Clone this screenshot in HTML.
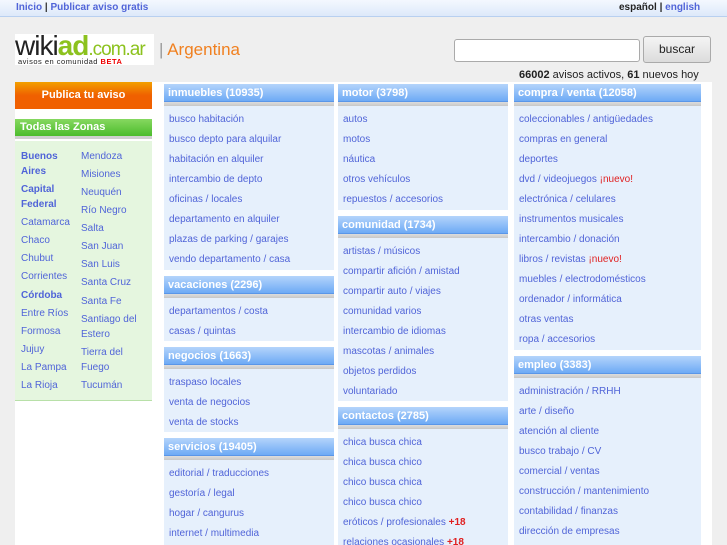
<!DOCTYPE html>
<html><head><meta charset="utf-8"><style>
*{margin:0;padding:0;box-sizing:border-box}
html,body{width:727px;height:545px;overflow:hidden}
body{background:#efefef;font-family:"Liberation Sans",sans-serif;position:relative}
a{color:#5064d8;text-decoration:none}
.top{position:absolute;left:0;top:0;width:727px;height:17px;background:linear-gradient(#f4f8fe,#dde9fa);border-bottom:1px solid #b8d0f0;font-size:10px;font-weight:bold;line-height:16px}
.white{position:absolute;left:15px;top:82px;width:697px;height:463px;background:#fff}
.box{position:absolute;background:#e6f0fc}
.hd{height:18px;background:linear-gradient(#b4d4fb,#6eaaf5);color:#fff;font-weight:bold;font-size:11px;line-height:18px;padding-left:4px;border-bottom:1px solid #5a96e8}
.gb{height:4px;background:linear-gradient(#ddd,#c8c8c8)}
.box ul{list-style:none;padding:8px 0 0 5px}
.box li{height:20px;font-size:10px;line-height:12px}
.r{color:#e02020}
.zones{position:absolute;left:15px;top:141px;width:137px;height:260px;background:#e5f6df;border-bottom:1px solid #b8e0a8;font-size:10px}
.zones div{position:absolute;line-height:14.5px}
</style></head><body>
<div class="top"><span style="position:absolute;left:16px"><a href="#">Inicio</a> <span style="color:#333">|</span> <a href="#">Publicar aviso gratis</a></span><span style="position:absolute;left:619px;color:#222">español | <a href="#">english</a></span></div>
<div style="position:absolute;left:15px;top:34px;width:139px;height:31px;background:#fff"></div>
<div style="position:absolute;left:15px;top:31px;font-size:28px;letter-spacing:-1px;line-height:30px"><span style="color:#222">wiki</span><span style="color:#8cc21e;font-weight:bold">ad</span><span style="color:#8cc21e;font-size:19px">.com.ar</span></div>
<div style="position:absolute;left:18px;top:57px;font-size:7.5px;color:#222;letter-spacing:.5px">avisos en comunidad <b style="color:#e00">BETA</b></div>
<div style="position:absolute;left:159px;top:40px;font-size:17px;color:#f08020"><span style="color:#999">|</span> Argentina</div>
<div style="position:absolute;left:454px;top:39px;width:186px;height:23px;border:1px solid #aaa;border-radius:3px;background:#fff"></div>
<div style="position:absolute;left:643px;top:36px;width:68px;height:27px;border:1px solid #aaa;border-radius:3px;background:linear-gradient(#f4f4f4,#dcdcdc);font-size:12px;text-align:center;line-height:25px;color:#222">buscar</div>
<div style="position:absolute;left:519px;top:69px;font-size:11px;color:#222"><b>66002</b> avisos activos, <b>61</b> nuevos hoy</div>
<div class="white"></div>
<div style="position:absolute;left:15px;top:82px;width:137px;height:27px;background:linear-gradient(#f2a000,#f06000 50%,#f06000);color:#fff;font-weight:bold;font-size:11px;text-align:center;line-height:27px">Publica tu aviso</div>
<div style="position:absolute;left:15px;top:119px;width:137px;background:linear-gradient(#86d860,#4cbc2c);color:#fff;font-weight:bold;font-size:11px;line-height:17px;padding-left:5px;border-bottom:3px solid #cfcfcf;height:20px">Todas las Zonas</div>
<div class="zones">
<div style="left:6px;top:9px;width:55px;font-weight:bold"><a href="#">Buenos Aires</a></div>
<div style="left:6px;top:42px;font-weight:bold"><a href="#">Capital<br>Federal</a></div>
<div style="left:6px;top:75px"><a href="#">Catamarca</a></div>
<div style="left:6px;top:93px"><a href="#">Chaco</a></div>
<div style="left:6px;top:111px"><a href="#">Chubut</a></div>
<div style="left:6px;top:129px"><a href="#">Corrientes</a></div>
<div style="left:6px;top:148px;font-weight:bold"><a href="#">Córdoba</a></div>
<div style="left:6px;top:166px"><a href="#">Entre Ríos</a></div>
<div style="left:6px;top:184px"><a href="#">Formosa</a></div>
<div style="left:6px;top:202px"><a href="#">Jujuy</a></div>
<div style="left:6px;top:220px"><a href="#">La Pampa</a></div>
<div style="left:6px;top:238px"><a href="#">La Rioja</a></div>
<div style="left:66px;top:9px"><a href="#">Mendoza</a></div>
<div style="left:66px;top:27px"><a href="#">Misiones</a></div>
<div style="left:66px;top:45px"><a href="#">Neuquén</a></div>
<div style="left:66px;top:63px"><a href="#">Río Negro</a></div>
<div style="left:66px;top:81px"><a href="#">Salta</a></div>
<div style="left:66px;top:99px"><a href="#">San Juan</a></div>
<div style="left:66px;top:117px"><a href="#">San Luis</a></div>
<div style="left:66px;top:135px"><a href="#">Santa Cruz</a></div>
<div style="left:66px;top:154px"><a href="#">Santa Fe</a></div>
<div style="left:66px;top:172px"><a href="#">Santiago del<br>Estero</a></div>
<div style="left:66px;top:205px"><a href="#">Tierra del<br>Fuego</a></div>
<div style="left:66px;top:238px"><a href="#">Tucumán</a></div>
</div>

<div class="box" style="left:164px;top:84px;width:170px;height:186px"><div class="hd">inmuebles (10935)</div><div class="gb"></div><ul><li><a>busco habitación</a></li><li><a>busco depto para alquilar</a></li><li><a>habitación en alquiler</a></li><li><a>intercambio de depto</a></li><li><a>oficinas / locales</a></li><li><a>departamento en alquiler</a></li><li><a>plazas de parking / garajes</a></li><li><a>vendo departamento / casa</a></li></ul></div>
<div class="box" style="left:164px;top:276px;width:170px;height:65px"><div class="hd">vacaciones (2296)</div><div class="gb"></div><ul><li><a>departamentos / costa</a></li><li><a>casas / quintas</a></li></ul></div>
<div class="box" style="left:164px;top:347px;width:170px;height:85px"><div class="hd">negocios (1663)</div><div class="gb"></div><ul><li><a>traspaso locales</a></li><li><a>venta de negocios</a></li><li><a>venta de stocks</a></li></ul></div>
<div class="box" style="left:164px;top:438px;width:170px;height:107px"><div class="hd">servicios (19405)</div><div class="gb"></div><ul><li><a>editorial / traducciones</a></li><li><a>gestoría / legal</a></li><li><a>hogar / cangurus</a></li><li><a>internet / multimedia</a></li></ul></div>

<div class="box" style="left:338px;top:84px;width:170px;height:126px"><div class="hd">motor (3798)</div><div class="gb"></div><ul><li><a>autos</a></li><li><a>motos</a></li><li><a>náutica</a></li><li><a>otros vehículos</a></li><li><a>repuestos / accesorios</a></li></ul></div>
<div class="box" style="left:338px;top:216px;width:170px;height:185px"><div class="hd">comunidad (1734)</div><div class="gb"></div><ul><li><a>artistas / músicos</a></li><li><a>compartir afición / amistad</a></li><li><a>compartir auto / viajes</a></li><li><a>comunidad varios</a></li><li><a>intercambio de idiomas</a></li><li><a>mascotas / animales</a></li><li><a>objetos perdidos</a></li><li><a>voluntariado</a></li></ul></div>
<div class="box" style="left:338px;top:407px;width:170px;height:138px"><div class="hd">contactos (2785)</div><div class="gb"></div><ul><li><a>chica busca chica</a></li><li><a>chica busca chico</a></li><li><a>chico busca chica</a></li><li><a>chico busca chico</a></li><li><a>eróticos / profesionales</a> <b class="r">+18</b></li><li><a>relaciones ocasionales</a> <b class="r">+18</b></li></ul></div>

<div class="box" style="left:514px;top:84px;width:187px;height:266px"><div class="hd">compra / venta (12058)</div><div class="gb"></div><ul><li><a>coleccionables / antigüedades</a></li><li><a>compras en general</a></li><li><a>deportes</a></li><li><a>dvd / videojuegos</a> <span class="r">¡nuevo!</span></li><li><a>electrónica / celulares</a></li><li><a>instrumentos musicales</a></li><li><a>intercambio / donación</a></li><li><a>libros / revistas</a> <span class="r">¡nuevo!</span></li><li><a>muebles / electrodomésticos</a></li><li><a>ordenador / informática</a></li><li><a>otras ventas</a></li><li><a>ropa / accesorios</a></li></ul></div>
<div class="box" style="left:514px;top:356px;width:187px;height:189px"><div class="hd">empleo (3383)</div><div class="gb"></div><ul><li><a>administración / RRHH</a></li><li><a>arte / diseño</a></li><li><a>atención al cliente</a></li><li><a>busco trabajo / CV</a></li><li><a>comercial / ventas</a></li><li><a>construcción / mantenimiento</a></li><li><a>contabilidad / finanzas</a></li><li><a>dirección de empresas</a></li></ul></div>
</body></html>
